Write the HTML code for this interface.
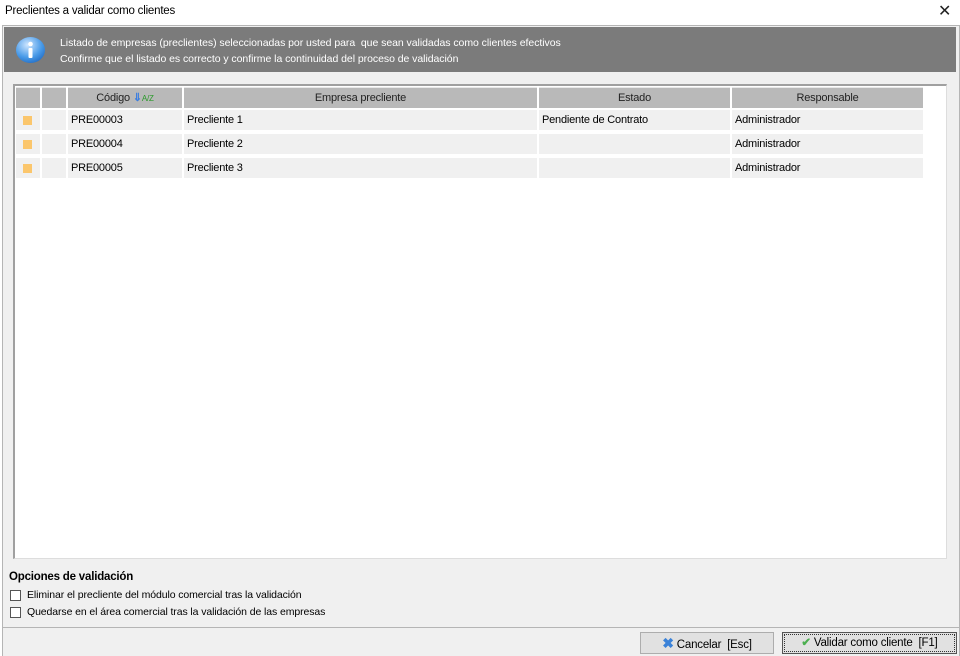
<!DOCTYPE html>
<html><head><meta charset="utf-8"><style>
*{margin:0;padding:0;box-sizing:border-box}
body{width:960px;height:656px;background:#fff;font-family:"Liberation Sans",sans-serif;font-size:11px;letter-spacing:-0.2px;color:#000;position:relative;overflow:hidden}
.a{position:absolute}
.cell{position:absolute;background:#f0f0f0;line-height:21px;padding-left:3px;white-space:nowrap}
.hd{position:absolute;background:#b9b9b9;border-top:1px solid #e8e8e8;line-height:20px;text-align:center;color:#222}
.cb{position:absolute;width:11px;height:11px;border:1px solid #555;background:#fff}
.btn{position:absolute;top:632px;height:22px;background:#e1e1e1;border:1px solid #adadad;line-height:21px;font-size:11.5px;color:#000;text-align:center}
</style></head><body>
<div class="a" style="left:5px;top:5px;font-size:11.5px">Preclientes a validar como clientes</div>
<div class="a" style="left:938px;top:1px;font-size:16px;color:#222">✕</div>
<div class="a" style="left:2px;top:25px;width:958px;height:631px;background:#f0f0f0;border:1px solid #b5b5b5;border-bottom:none"></div>
<div class="a" style="left:4px;top:27px;width:952px;height:45px;background:#7b7b7b"></div>
<svg class="a" style="left:15px;top:36px" width="31" height="28" viewBox="0 0 31 28"><defs><radialGradient id="g" cx="0.4" cy="0.3" r="0.8"><stop offset="0" stop-color="#cfe6ff"/><stop offset="0.6" stop-color="#4a9be8"/><stop offset="1" stop-color="#1d67c0"/></radialGradient></defs><ellipse cx="15.5" cy="14" rx="14.5" ry="13" fill="url(#g)"/><rect x="13.5" y="12" width="4" height="10" rx="1" fill="#fff"/><circle cx="15.5" cy="8" r="2.3" fill="#fff"/></svg>
<div class="a" style="left:60px;top:35px;color:#fff;font-size:10.5px;letter-spacing:-0.05px;line-height:16px">Listado de empresas (preclientes) seleccionadas por usted para &nbsp;que sean validadas como clientes efectivos<br>Confirme que el listado es correcto y confirme la continuidad del proceso de validación</div>
<div class="a" style="left:13px;top:84px;width:934px;height:475px;background:#fff;border-top:2px solid #a0a0a0;border-left:2px solid #a0a0a0;border-right:1px solid #ddd;border-bottom:1px solid #ddd"></div>
<div class="hd" style="left:16px;top:87px;width:24px;height:21px"></div>
<div class="hd" style="left:42px;top:87px;width:24px;height:21px"></div>
<div class="hd" style="left:68px;top:87px;width:114px;height:21px">Código <span style="color:#3a7de0;font-weight:bold">⇓</span><span style="color:#2a9a2a;font-size:8px">A/Z</span></div>
<div class="hd" style="left:184px;top:87px;width:353px;height:21px">Empresa precliente</div>
<div class="hd" style="left:539px;top:87px;width:191px;height:21px">Estado</div>
<div class="hd" style="left:732px;top:87px;width:191px;height:21px">Responsable</div>

<div class="cell" style="left:16px;top:110px;width:24px;height:20px"></div><div class="a" style="left:23px;top:116px;width:9px;height:9px;background:#fbc66c"></div>
<div class="cell" style="left:42px;top:110px;width:24px;height:20px"></div>
<div class="cell" style="left:68px;top:110px;width:114px;height:20px">PRE00003</div>
<div class="cell" style="left:184px;top:110px;width:353px;height:20px">Precliente 1</div>
<div class="cell" style="left:539px;top:110px;width:191px;height:20px">Pendiente de Contrato</div>
<div class="cell" style="left:732px;top:110px;width:191px;height:20px">Administrador</div>

<div class="cell" style="left:16px;top:134px;width:24px;height:20px"></div><div class="a" style="left:23px;top:140px;width:9px;height:9px;background:#fbc66c"></div>
<div class="cell" style="left:42px;top:134px;width:24px;height:20px"></div>
<div class="cell" style="left:68px;top:134px;width:114px;height:20px">PRE00004</div>
<div class="cell" style="left:184px;top:134px;width:353px;height:20px">Precliente 2</div>
<div class="cell" style="left:539px;top:134px;width:191px;height:20px"></div>
<div class="cell" style="left:732px;top:134px;width:191px;height:20px">Administrador</div>

<div class="cell" style="left:16px;top:158px;width:24px;height:20px"></div><div class="a" style="left:23px;top:164px;width:9px;height:9px;background:#fbc66c"></div>
<div class="cell" style="left:42px;top:158px;width:24px;height:20px"></div>
<div class="cell" style="left:68px;top:158px;width:114px;height:20px">PRE00005</div>
<div class="cell" style="left:184px;top:158px;width:353px;height:20px">Precliente 3</div>
<div class="cell" style="left:539px;top:158px;width:191px;height:20px"></div>
<div class="cell" style="left:732px;top:158px;width:191px;height:20px">Administrador</div>

<div class="a" style="left:9px;top:571px;font-weight:bold;font-size:11.5px">Opciones de validación</div>
<div class="cb" style="left:10px;top:590px"></div>
<div class="a" style="left:27px;top:589px;font-size:10.5px;letter-spacing:-0.1px">Eliminar el precliente del módulo comercial tras la validación</div>
<div class="cb" style="left:10px;top:607px"></div>
<div class="a" style="left:27px;top:606px;font-size:10.5px;letter-spacing:-0.1px">Quedarse en el área comercial tras la validación de las empresas</div>
<div class="a" style="left:2px;top:627px;width:958px;height:1px;background:#b5b5b5"></div>

<div class="btn" style="left:640px;width:134px"><span style="color:#3b82d8;font-weight:bold;font-size:14px">✖</span> Cancelar &nbsp;[Esc]</div>
<div class="btn" style="left:782px;width:175px;border:1px solid #555;outline:1px dotted #333;outline-offset:-3px"><span style="color:#4caf50;font-weight:bold">✔</span> Validar como cliente &nbsp;[F1]</div>
</body></html>
